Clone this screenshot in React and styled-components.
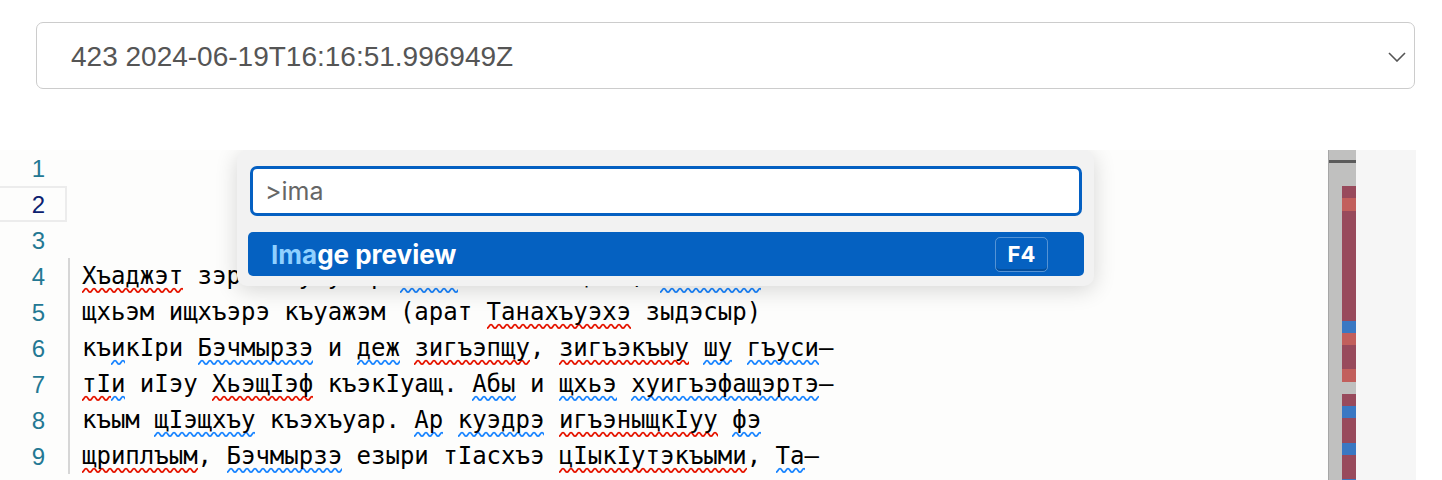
import styled, { createGlobalStyle } from "styled-components"

const GlobalStyle = createGlobalStyle`
  html, body {
    margin: 0;
    background: #ffffff;
  }
  body {
    overflow: hidden;
  }
`

const wave = (hex) =>
  `url("data:image/svg+xml,%3Csvg xmlns='http://www.w3.org/2000/svg' width='8' height='7' viewBox='0 0 8 7'%3E%3Cpath d='M0 5.2 C1.6 5.2 2.3 1.6 4 1.6 S6.4 5.2 8 5.2' fill='none' stroke='%23${hex}' stroke-width='1.8'/%3E%3C/svg%3E")`

const text = [
  [],
  [],
  [],
  [
    { t: "Хъаджэт", k: "err" }, " зэрыпсэу унэр ", { t: "жылэ", k: "info" },
    " и кIэм щыIэ, ", { t: "хьэблэм", k: "info" },
  ],
  ["щхьэм ищхъэрэ къуажэм (арат ", { t: "Танахъуэхэ", k: "err" }, " зыдэсыр)"],
  [
    "къ", { t: "и", k: "info" }, "кIри ", { t: "Бэчмырзэ", k: "info" }, " и ",
    { t: "деж", k: "info" }, " ", { t: "зигъэпщу", k: "err" }, ", ",
    { t: "зигъэкъыу", k: "err" }, " ", { t: "шу", k: "info" }, " ",
    { t: "гъуси", k: "info" }, "–",
  ],
  [
    { t: "тI", k: "err" }, { t: "и", k: "info" }, " иIэу ", { t: "ХьэщIэф", k: "err" },
    " къэкIуащ. ", { t: "Абы", k: "info" }, " и ", { t: "щхьэ", k: "info" }, " ",
    { t: "хуигъэфащэртэ", k: "info" }, "–",
  ],
  [
    "къым ", { t: "щIэщхъу", k: "info" }, " къэхъуар. ", { t: "Ар", k: "info" }, " ",
    { t: "куэдрэ", k: "info" }, " ", { t: "игъэныщкIуу", k: "err" }, " ",
    { t: "фэ", k: "info" },
  ],
  [
    { t: "щриплъым", k: "err" }, ", ", { t: "Бэчмырзэ", k: "info" }, " езыри тIасхъэ ",
    { t: "цIыкIутэкъыми", k: "err" }, ", ", { t: "Та", k: "info" }, "–",
  ],
]

// overview ruler, top to bottom
const marks = [
  { h: 10 },
  { h: 3, c: "#5b5b5b", full: true },
  { h: 23 },
  { h: 12, c: "#984a5c" },
  { h: 13, c: "#c25f5c" },
  { h: 110, c: "#984a5c" },
  { h: 12, c: "#3a78c3" },
  { h: 12, c: "#c25f5c" },
  { h: 24, c: "#984a5c" },
  { h: 13, c: "#c25f5c" },
  { h: 12 },
  { h: 12, c: "#984a5c" },
  { h: 12, c: "#3a78c3" },
  { h: 25, c: "#984a5c" },
  { h: 12, c: "#3a78c3" },
  { h: 24, c: "#984a5c" },
  { h: 2, c: "#3a78c3" },
]

export default function App() {
  return (
    <>
      <GlobalStyle />
      <Page>
        <Select>
          <SelectValue>423 2024-06-19T16:16:51.996949Z</SelectValue>
          <svg width="18" height="10" viewBox="0 0 18 10">
            <polyline points="1,1 9,9 17,1" fill="none" stroke="#555" strokeWidth="1.6" />
          </svg>
        </Select>

        <Editor>
          <Gutter>
            {text.map((_, i) => (
              <LineNo key={i} $active={i === 1}>{i + 1}</LineNo>
            ))}
          </Gutter>

          <Content>
            <Blank />
            <Blank />
            <Blank />
            <Paragraph>
              {text.slice(3).map((line, i) => (
                <Line key={i}>
                  {line.map((tok, j) =>
                    typeof tok === "string" ? tok : <Squiggle key={j} $kind={tok.k}>{tok.t}</Squiggle>
                  )}
                </Line>
              ))}
            </Paragraph>
          </Content>

          <Ruler>
            {marks.map((m, i) => (
              <Mark key={i} $h={m.h} $c={m.c} $full={m.full} />
            ))}
          </Ruler>
          <SidePanel />

          <Palette>
            <PaletteInput>&gt;ima</PaletteInput>
            <Result>
              <ResultLabel><Match>Ima</Match>ge preview</ResultLabel>
              <Kbd>F4</Kbd>
            </Result>
          </Palette>
        </Editor>
      </Page>
    </>
  )
}

const Page = styled.div`
  width: 1442px;
  height: 480px;
  overflow: hidden;
  padding-top: 22px;
  box-sizing: border-box;
`
const Select = styled.div`
  margin: 0 27px 0 36px;
  height: 67px;
  box-sizing: border-box;
  border: 1.5px solid #cccccc;
  border-radius: 7px;
  display: flex;
  align-items: center;
  justify-content: space-between;
  padding: 3px 8px 0 34px;
`
const SelectValue = styled.span`
  font-family: "Liberation Sans", Arial, sans-serif;
  font-size: 28px;
  color: #555555;
`
const Editor = styled.div`
  position: relative;
  margin-top: 61px;
  width: 1416px;
  height: 330px;
  display: flex;
  background: #fdfdfc;
  overflow: hidden;
`
const Gutter = styled.div`
  width: 67px;
  flex: none;
`
const LineNo = styled.div`
  height: 36px;
  box-sizing: border-box;
  display: flex;
  align-items: center;
  justify-content: flex-end;
  padding-right: 20px;
  font-family: "Liberation Sans", Arial, sans-serif;
  font-size: 24px;
  color: ${(p) => (p.$active ? "#0b216f" : "#237893")};
  border: 2px solid ${(p) => (p.$active ? "#ececec" : "transparent")};
  border-left: none;
  padding-top: 1px;
`
const Content = styled.div`
  flex: 1;
  padding-left: 1px;
`
const Blank = styled.div`
  height: 36px;
`
const Paragraph = styled.div`
  border-left: 2px solid #d6d6d6;
  padding-left: 12px;
`
const Line = styled.div`
  height: 36px;
  line-height: 36px;
  white-space: pre;
  font-family: "DejaVu Sans Mono", monospace;
  font-size: 24px;
  color: #000000;
`
const Squiggle = styled.span`
  padding-bottom: 4px;
  background-image: ${(p) => wave(p.$kind === "err" ? "e51400" : "1a85ff")};
  background-repeat: repeat-x;
  background-position: left bottom;
  background-size: 8px 7px;
`
const Ruler = styled.div`
  width: 28px;
  flex: none;
  box-sizing: border-box;
  background: #c0c0bf;
  border-left: 1px solid #a6a6a6;
  display: flex;
  flex-direction: column;
`
const Mark = styled.div`
  height: ${(p) => p.$h}px;
  flex: none;
  background: ${(p) => p.$c || "transparent"};
  width: ${(p) => (p.$full ? "100%" : "14px")};
  align-self: flex-end;
`
const SidePanel = styled.div`
  width: 60px;
  flex: none;
  background: #f6f6f6;
`
const Palette = styled.div`
  position: absolute;
  left: 237px;
  top: 0;
  width: 857px;
  height: 136px;
  box-sizing: border-box;
  padding: 16px 10px 10px 11px;
  background: #f2f2f2;
  border-radius: 10px;
  box-shadow: 0 4px 22px rgba(0, 0, 0, 0.16);
  display: flex;
  flex-direction: column;
  gap: 16px;
`
const PaletteInput = styled.div`
  margin: 0 2px;
  height: 50px;
  box-sizing: border-box;
  border: 3px solid #0560c2;
  border-radius: 7px;
  background: #ffffff;
  display: flex;
  align-items: center;
  padding-left: 12px;
  font-family: Inter, "Noto Sans", sans-serif;
  font-size: 25px;
  color: #666666;
`
const Result = styled.div`
  height: 44px;
  border-radius: 5px;
  background: #0561c1;
  display: flex;
  align-items: center;
  justify-content: space-between;
  padding: 0 36px 0 23px;
`
const ResultLabel = styled.span`
  font-family: Inter, "Noto Sans", sans-serif;
  font-weight: 700;
  font-size: 26px;
  color: #ffffff;
`
const Match = styled.span`
  color: #8fd0ff;
`
const Kbd = styled.span`
  height: 35px;
  width: 53px;
  box-sizing: border-box;
  display: flex;
  align-items: center;
  justify-content: center;
  border: 1.5px solid rgba(255, 255, 255, 0.32);
  border-radius: 5px;
  box-shadow: inset 0 -2px 0 rgba(0, 0, 0, 0.18);
  font-family: Inter, "Noto Sans", sans-serif;
  font-weight: 700;
  font-size: 22px;
  color: #ffffff;
`
